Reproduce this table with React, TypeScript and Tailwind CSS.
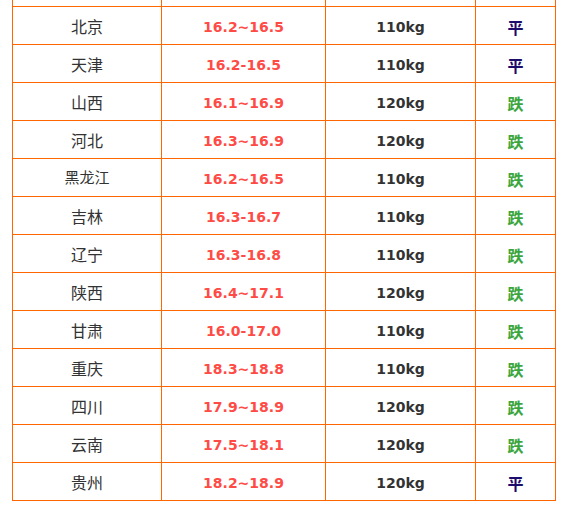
import React from 'react';

// 猪价行情表（截取部分）
const rows = [
  { area: '北京', price: '16.2~16.5', weight: '110kg', trend: '平' },
  { area: '天津', price: '16.2-16.5', weight: '110kg', trend: '平' },
  { area: '山西', price: '16.1~16.9', weight: '120kg', trend: '跌' },
  { area: '河北', price: '16.3~16.9', weight: '120kg', trend: '跌' },
  { area: '黑龙江', price: '16.2~16.5', weight: '110kg', trend: '跌', small: true },
  { area: '吉林', price: '16.3-16.7', weight: '110kg', trend: '跌' },
  { area: '辽宁', price: '16.3-16.8', weight: '110kg', trend: '跌' },
  { area: '陕西', price: '16.4~17.1', weight: '120kg', trend: '跌' },
  { area: '甘肃', price: '16.0-17.0', weight: '110kg', trend: '跌' },
  { area: '重庆', price: '18.3~18.8', weight: '110kg', trend: '跌' },
  { area: '四川', price: '17.9~18.9', weight: '120kg', trend: '跌' },
  { area: '云南', price: '17.5~18.1', weight: '120kg', trend: '跌' },
  { area: '贵州', price: '18.2~18.9', weight: '120kg', trend: '平' },
];

const cjk = "font-['Noto_Sans_CJK_SC',sans-serif]";
const num = "font-['DejaVu_Sans','Noto_Sans_CJK_SC',sans-serif] font-bold text-[14px] pt-[3px]";
const cell = 'bg-white flex items-center justify-center h-[37px]';

export default function App() {
  return (
    <div className="w-[571px] h-[515px] bg-white overflow-hidden">
      {/* 橙色表格线：底色 + 1px 间隙 */}
      <div className="ml-[12px] w-[544px] bg-[#ff6600] px-px pb-px grid grid-cols-[148px_163px_149px_1fr] gap-px">
        {/* 上一行被截掉的部分 */}
        <div className="bg-white h-[6px]" />
        <div className="bg-white h-[6px]" />
        <div className="bg-white h-[6px]" />
        <div className="bg-white h-[6px]" />
        {rows.map((r) => (
          <React.Fragment key={r.area}>
            <div className={`${cell} text-[#333] ${cjk} ${r.small ? 'text-[15px]' : 'text-[16px]'}`}>
              {r.area}
            </div>
            <div className={`${cell} text-[#ff4b45] ${num}`}>{r.price}</div>
            <div className={`${cell} text-[#333] ${num}`}>{r.weight}</div>
            <div
              className={`${cell} font-bold text-[16px] pt-[2px] ${cjk} ${
                r.trend === '平' ? 'text-[#1c0c6c]' : 'text-[#3ca63e]'
              }`}
            >
              {r.trend}
            </div>
          </React.Fragment>
        ))}
      </div>
    </div>
  );
}
